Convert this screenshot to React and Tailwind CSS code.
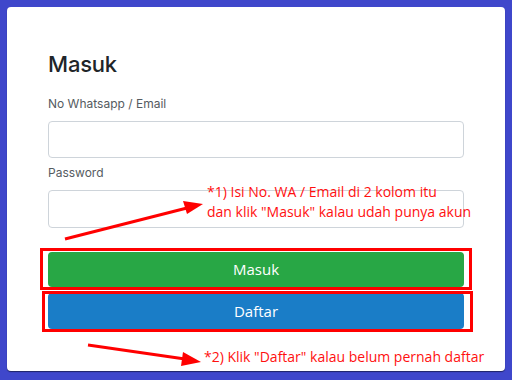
import React from 'react'

const App = () => {
  return (
    <div className="w-[512px] h-[380px] bg-[#3f47cb] p-[7px] pb-[9px]">
      <div className="relative h-[364px] bg-white rounded-[4px] shadow-[0_1px_1px_rgba(0,0,0,0.5)] pt-[43px] px-[41px]">
        <h1 className="text-[22px] leading-[28px] font-medium text-[#212529] font-['Inter',sans-serif] tracking-[-0.2px]">Masuk</h1>

        <label className="block mt-[17px] text-[12px] leading-[18px] text-[#555b61] font-['Inter',sans-serif]">No Whatsapp / Email</label>
        <input className="block mt-[8px] w-[416px] h-[37px] border border-[#ced4da] rounded-[4px]" />

        <label className="block mt-[6px] text-[12px] leading-[18px] text-[#555b61] font-['Inter',sans-serif]">Password</label>
        <input type="password" className="block mt-[8px] w-[416px] h-[38px] border border-[#ced4da] rounded-[4px]" />

        <div className="mt-[24px] flex flex-col gap-[6px] w-[416px] font-['Open_Sans',sans-serif] text-[15px] text-white">
          <button className="h-[35px] bg-[#28a745] rounded-[4px]">Masuk</button>
          <button className="h-[36px] bg-[#1a7dc7] rounded-[4px]">Daftar</button>
        </div>

        {/* annotation boxes */}
        <div className="absolute left-[33px] top-[241px] w-[432px] h-[42px] border-[3px] border-[#ff0000]" />
        <div className="absolute left-[35px] top-[284px] w-[431px] h-[41px] border-[3px] border-[#ff0000]" />

        <svg className="absolute left-0 top-0 pointer-events-none" width="498" height="364">
          <line x1="58" y1="232" x2="180" y2="201" stroke="#ff0000" strokeWidth="3" />
          <polygon points="196,197 176,194 180,207" fill="#ff0000" />
          <line x1="81" y1="338" x2="178" y2="352" stroke="#ff0000" strokeWidth="3" />
          <polygon points="194,355 176,345 174,359" fill="#ff0000" />
        </svg>

        <div className="absolute left-[200px] top-[175px] text-[14px] leading-[20px] text-[#ff1010] font-['Open_Sans',sans-serif] whitespace-nowrap">
          <div>*1) Isi No. WA / Email di 2 kolom itu</div>
          <div>dan klik "Masuk" kalau udah punya akun</div>
        </div>
        <div className="absolute left-[197px] top-[340px] text-[14px] leading-[20px] text-[#ff1010] font-['Open_Sans',sans-serif] whitespace-nowrap">
          *2) Klik "Daftar" kalau belum pernah daftar
        </div>
      </div>
    </div>
  )
}

export default App
